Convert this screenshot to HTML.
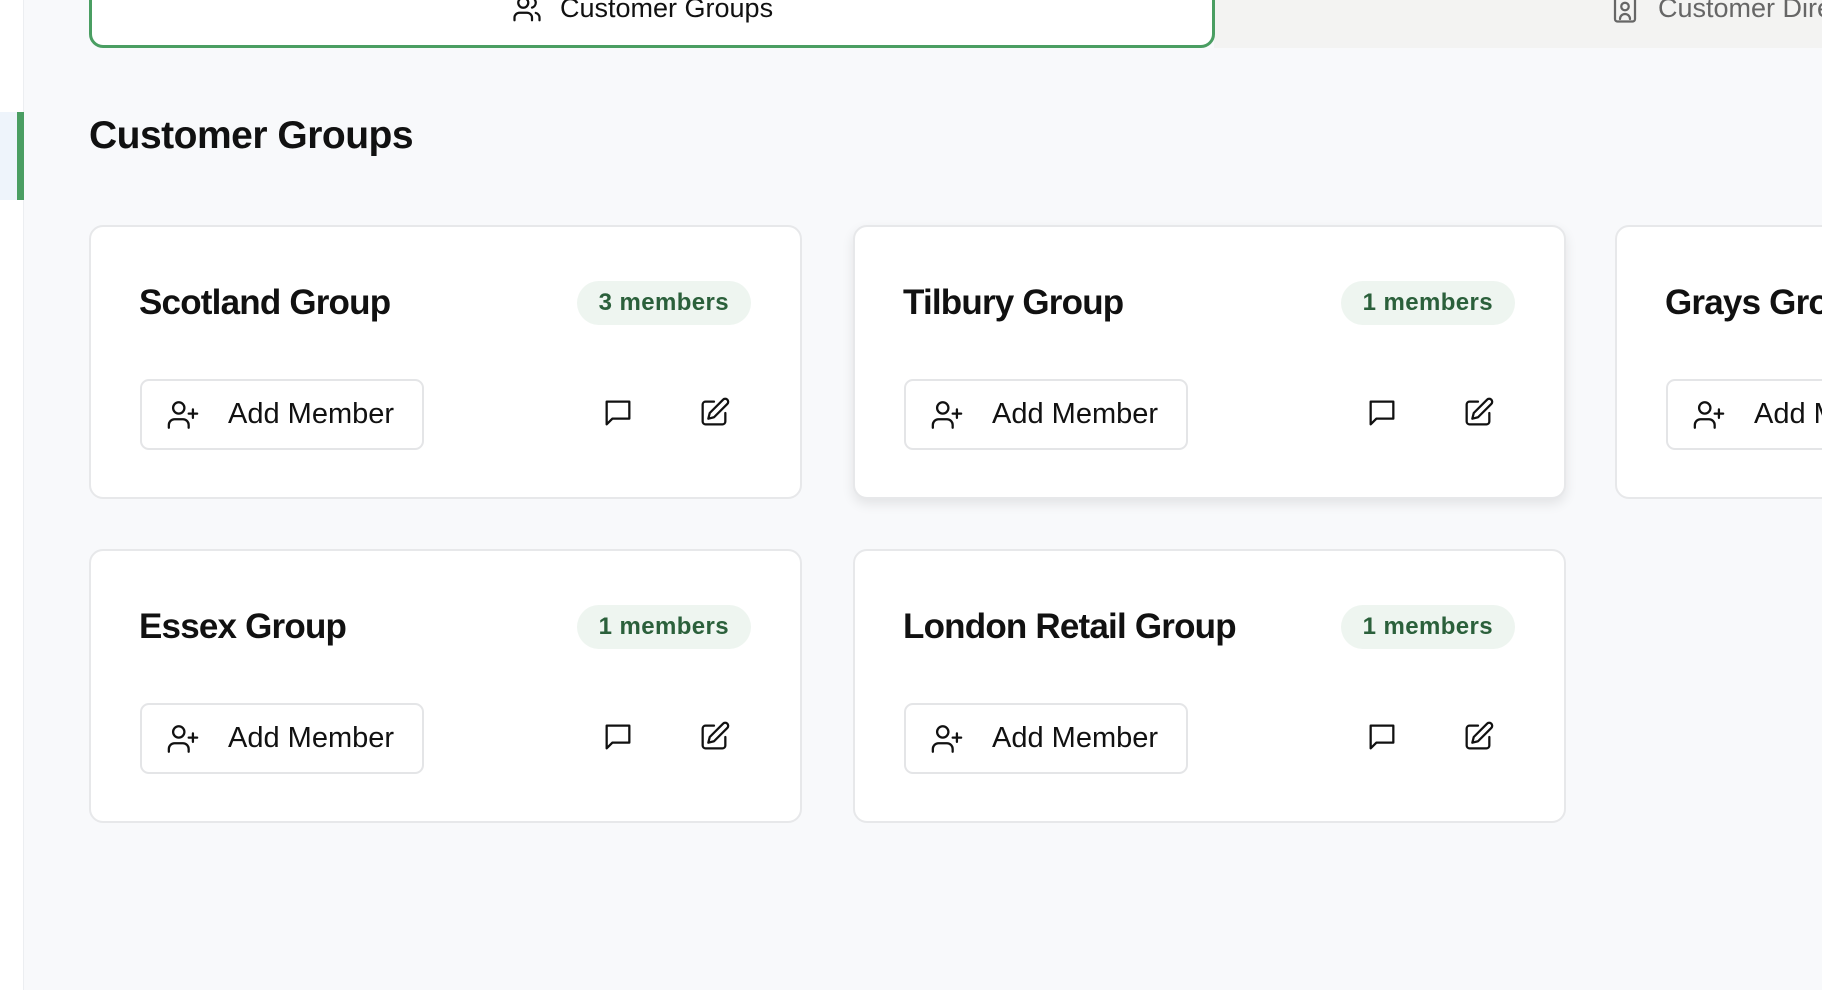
<!DOCTYPE html>
<html><head><meta charset="utf-8"><style>
*{box-sizing:border-box;margin:0;padding:0}
body{width:1822px;height:990px;overflow:hidden;background:#f8f9fb;font-family:"Liberation Sans",sans-serif;color:#111;position:relative}
.side{position:absolute;left:0;top:0;width:24px;height:990px;background:#fff;border-right:1px solid #eceef1}
.side .hl{position:absolute;left:0;top:112px;width:24px;height:88px;background:#eef4fb}
.side .bar{position:absolute;left:17px;top:112px;width:7px;height:88px;background:#4a9e62}
.tabbar{position:absolute;left:1214px;top:0;width:608px;height:48px;background:#f3f3f2}
.tab{position:absolute;left:89px;top:-20px;width:1126px;height:68px;border:3px solid #4a9e62;border-radius:14px;background:#fff}
.tabtxt{position:absolute;top:-7px;font-size:27px;display:flex;align-items:center;gap:18px;white-space:nowrap}
h1{position:absolute;left:89px;top:114px;font-size:39px;font-weight:600;letter-spacing:-0.5px}
.card{position:absolute;width:713px;height:274px;background:#fff;border:2px solid #e7e8ea;border-radius:14px}
.card.sh{box-shadow:0 5px 12px rgba(0,0,0,.09)}
.title{position:absolute;left:48px;top:56px;font-size:35px;font-weight:600;letter-spacing:-0.8px;white-space:nowrap}
.badge{position:absolute;right:49px;top:54px;height:44px;padding:0 22px;border-radius:22px;background:#eef5f0;color:#2b603b;font-size:24px;font-weight:600;line-height:44px;white-space:nowrap;letter-spacing:0.4px}
.btn{position:absolute;left:49px;top:152px;width:284px;height:71px;border:2px solid #e4e5e7;border-radius:9px;display:flex;align-items:center;padding-left:24px;font-size:29px;white-space:nowrap;background:#fff}
.btn svg{margin-right:28px}
.ic{position:absolute;top:169px}
</style></head><body>
<div class="side"><div class="hl"></div><div class="bar"></div></div>
<div class="tabbar"></div>
<div class="tab"></div>
<div class="tabtxt" style="left:512px;color:#111">
<svg width="30" height="30" viewBox="0 0 24 24" fill="none" stroke="#111" stroke-width="1.8" stroke-linecap="round" stroke-linejoin="round"><path d="M16 21v-2a4 4 0 0 0-4-4H6a4 4 0 0 0-4 4v2"/><circle cx="9" cy="7" r="4"/><path d="M22 21v-2a4 4 0 0 0-3-3.87"/><path d="M16 3.13a4 4 0 0 1 0 7.75"/></svg>Customer Groups</div>
<div class="tabtxt" style="left:1610px;color:#666">
<svg width="30" height="30" viewBox="0 0 24 24" fill="none" stroke="#666" stroke-width="1.8" stroke-linecap="round" stroke-linejoin="round"><rect x="4" y="2" width="16" height="20" rx="2"/><circle cx="12" cy="10" r="3"/><path d="M8 20a4 4 0 0 1 8 0"/></svg>Customer Directory</div>
<h1>Customer Groups</h1>

<div class="card" style="left:89px;top:225px"><div class="title">Scotland Group</div><div class="badge">3 members</div>
<div class="btn"><svg width="34" height="34" viewBox="0 0 24 24" fill="none" stroke="#111" stroke-width="1.6" stroke-linecap="round"><circle cx="9" cy="7" r="4"/><path d="M2 21v-2a4 4 0 0 1 4-4h6a4 4 0 0 1 4 4v2"/><path d="M19 8v6M16 11h6"/></svg>Add Member</div>
<svg class="ic" style="left:510px" width="34" height="34" viewBox="0 0 24 24" fill="none" stroke="#111" stroke-width="1.6" stroke-linejoin="round"><path d="M4 4h16v12H8l-4 4z"/></svg>
<svg class="ic" style="left:606px" width="34" height="34" viewBox="0 0 24 24" fill="none" stroke="#111" stroke-width="1.6" stroke-linecap="round" stroke-linejoin="round"><path d="M12 4H6a2 2 0 0 0-2 2v12a2 2 0 0 0 2 2h12a2 2 0 0 0 2-2v-6"/><path d="M18.4 2.6a2.1 2.1 0 0 1 3 3L12 15l-4 1 1-4z"/></svg></div>

<div class="card sh" style="left:853px;top:225px"><div class="title">Tilbury Group</div><div class="badge">1 members</div>
<div class="btn"><svg width="34" height="34" viewBox="0 0 24 24" fill="none" stroke="#111" stroke-width="1.6" stroke-linecap="round"><circle cx="9" cy="7" r="4"/><path d="M2 21v-2a4 4 0 0 1 4-4h6a4 4 0 0 1 4 4v2"/><path d="M19 8v6M16 11h6"/></svg>Add Member</div>
<svg class="ic" style="left:510px" width="34" height="34" viewBox="0 0 24 24" fill="none" stroke="#111" stroke-width="1.6" stroke-linejoin="round"><path d="M4 4h16v12H8l-4 4z"/></svg>
<svg class="ic" style="left:606px" width="34" height="34" viewBox="0 0 24 24" fill="none" stroke="#111" stroke-width="1.6" stroke-linecap="round" stroke-linejoin="round"><path d="M12 4H6a2 2 0 0 0-2 2v12a2 2 0 0 0 2 2h12a2 2 0 0 0 2-2v-6"/><path d="M18.4 2.6a2.1 2.1 0 0 1 3 3L12 15l-4 1 1-4z"/></svg></div>

<div class="card" style="left:1615px;top:225px"><div class="title">Grays Group</div>
<div class="btn"><svg width="34" height="34" viewBox="0 0 24 24" fill="none" stroke="#111" stroke-width="1.6" stroke-linecap="round"><circle cx="9" cy="7" r="4"/><path d="M2 21v-2a4 4 0 0 1 4-4h6a4 4 0 0 1 4 4v2"/><path d="M19 8v6M16 11h6"/></svg>Add Member</div></div>

<div class="card" style="left:89px;top:549px"><div class="title">Essex Group</div><div class="badge">1 members</div>
<div class="btn"><svg width="34" height="34" viewBox="0 0 24 24" fill="none" stroke="#111" stroke-width="1.6" stroke-linecap="round"><circle cx="9" cy="7" r="4"/><path d="M2 21v-2a4 4 0 0 1 4-4h6a4 4 0 0 1 4 4v2"/><path d="M19 8v6M16 11h6"/></svg>Add Member</div>
<svg class="ic" style="left:510px" width="34" height="34" viewBox="0 0 24 24" fill="none" stroke="#111" stroke-width="1.6" stroke-linejoin="round"><path d="M4 4h16v12H8l-4 4z"/></svg>
<svg class="ic" style="left:606px" width="34" height="34" viewBox="0 0 24 24" fill="none" stroke="#111" stroke-width="1.6" stroke-linecap="round" stroke-linejoin="round"><path d="M12 4H6a2 2 0 0 0-2 2v12a2 2 0 0 0 2 2h12a2 2 0 0 0 2-2v-6"/><path d="M18.4 2.6a2.1 2.1 0 0 1 3 3L12 15l-4 1 1-4z"/></svg></div>

<div class="card" style="left:853px;top:549px"><div class="title">London Retail Group</div><div class="badge">1 members</div>
<div class="btn"><svg width="34" height="34" viewBox="0 0 24 24" fill="none" stroke="#111" stroke-width="1.6" stroke-linecap="round"><circle cx="9" cy="7" r="4"/><path d="M2 21v-2a4 4 0 0 1 4-4h6a4 4 0 0 1 4 4v2"/><path d="M19 8v6M16 11h6"/></svg>Add Member</div>
<svg class="ic" style="left:510px" width="34" height="34" viewBox="0 0 24 24" fill="none" stroke="#111" stroke-width="1.6" stroke-linejoin="round"><path d="M4 4h16v12H8l-4 4z"/></svg>
<svg class="ic" style="left:606px" width="34" height="34" viewBox="0 0 24 24" fill="none" stroke="#111" stroke-width="1.6" stroke-linecap="round" stroke-linejoin="round"><path d="M12 4H6a2 2 0 0 0-2 2v12a2 2 0 0 0 2 2h12a2 2 0 0 0 2-2v-6"/><path d="M18.4 2.6a2.1 2.1 0 0 1 3 3L12 15l-4 1 1-4z"/></svg></div>
</body></html>
